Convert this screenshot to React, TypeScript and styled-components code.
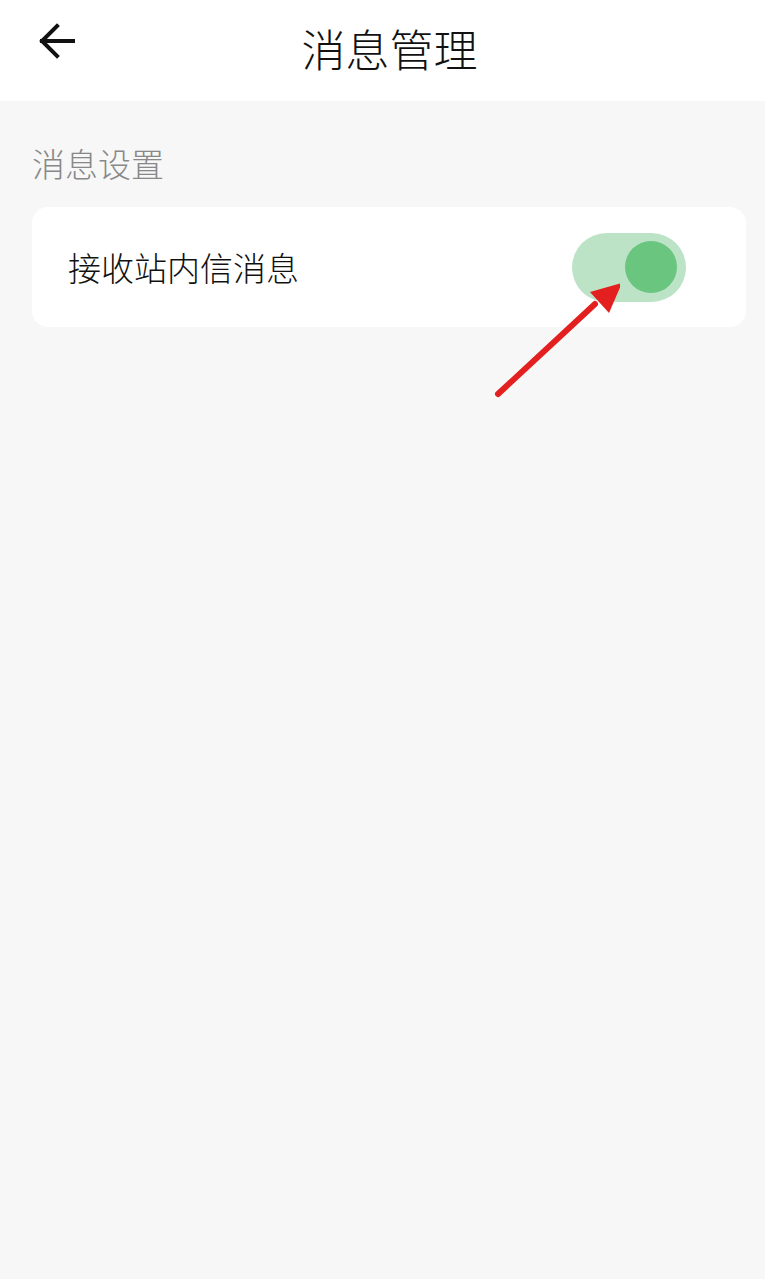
import styled, { createGlobalStyle } from 'styled-components'

const GlobalStyle = createGlobalStyle`
    html, body {
        margin: 0;
        padding: 0;
        background: #f7f7f7;
        font-family: "Noto Sans CJK SC", "Noto Sans", sans-serif;
    }
`

const BackIcon = () => (
    <svg width="38" height="38" viewBox="0 0 38 38" fill="none">
        <path d="M35 19H4M19 4L4 19l15 15" stroke="#111" strokeWidth="4" strokeLinecap="square" />
    </svg>
)

const Pointer = () => (
    <svg width="140" height="130" viewBox="0 0 140 130">
        <line x1="18" y1="112" x2="115" y2="22" stroke="#e3201f" strokeWidth="6" strokeLinecap="round" />
        <polygon points="142,1 110,10 129,31" fill="#e3201f" />
    </svg>
)

export default function App() {
    return (
        <Page>
            <GlobalStyle />
            <Header>
                <BackButton><BackIcon /></BackButton>
                <Title>消息管理</Title>
            </Header>
            <SectionLabel>消息设置</SectionLabel>
            <Card>
                <Row>
                    <RowText>接收站内信消息</RowText>
                    <Switch $on={true}>
                        <Thumb />
                    </Switch>
                </Row>
            </Card>
            <Annotation><Pointer /></Annotation>
        </Page>
    )
}

const Page = styled.div`
    position: relative;
    min-height: 1279px;
    background: #f7f7f7;
`

const Header = styled.header`
    position: relative;
    height: 101px;
    background: #fff;
    display: flex;
    align-items: center;
    justify-content: center;
    padding-bottom: 6px;
    box-sizing: border-box;
`

const BackButton = styled.div`
    position: absolute;
    left: 38px;
    top: 22px;
    display: flex;
`

const Title = styled.h1`
    margin: 0 0 0 14px;
    font-size: 44px;
    font-weight: 300;
    color: #111;
    line-height: 1;
`

const SectionLabel = styled.div`
    padding: 43px 0 0 32px;
    height: 63px;
    box-sizing: border-box;
    font-size: 33px;
    font-weight: 300;
    line-height: 38px;
    color: #888;
    margin-bottom: 43px;
`

const Card = styled.div`
    margin: 0 19px 0 32px;
    background: #fff;
    border-radius: 16px;
`

const Row = styled.div`
    height: 120px;
    display: flex;
    align-items: center;
    justify-content: space-between;
    padding: 0 60px 0 36px;
`

const RowText = styled.span`
    font-size: 33px;
    font-weight: 300;
    color: #111;
`

const Switch = styled.div<{ $on: boolean }>`
    width: 114px;
    height: 69px;
    border-radius: 35px;
    background: ${p => (p.$on ? '#bce3c6' : '#ddd')};
    display: flex;
    align-items: center;
    justify-content: ${p => (p.$on ? 'flex-end' : 'flex-start')};
    padding: 0 9px;
    box-sizing: border-box;
`

const Thumb = styled.div`
    width: 52px;
    height: 52px;
    border-radius: 50%;
    background: #6ac57f;
`

const Annotation = styled.div`
    position: absolute;
    left: 480px;
    top: 282px;
    display: flex;
`
